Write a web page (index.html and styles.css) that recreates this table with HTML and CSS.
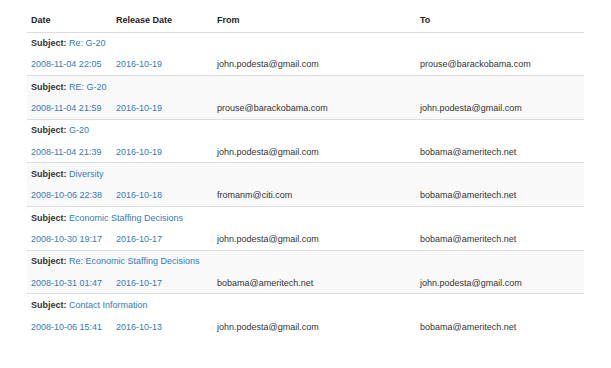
FILE: index.html
```html
<!DOCTYPE html>
<html lang="en">
<head>
  <meta charset="UTF-8">
  <title>Emails</title>
  <link rel="stylesheet" href="styles.css">
</head>
<body>
  <div class="wrap">
    <table class="emails">
      <colgroup>
        <col class="c-date">
        <col class="c-release">
        <col class="c-from">
        <col class="c-to">
      </colgroup>
      <thead>
        <tr>
          <th>Date</th>
          <th>Release Date</th>
          <th>From</th>
          <th>To</th>
        </tr>
      </thead>
      <tbody>
        <tr class="subject"><td colspan="4"><b>Subject:</b> <a href="#">Re: G-20</a></td></tr>
        <tr class="meta"><td><a href="#">2008-11-04 22:05</a></td><td><a href="#">2016-10-19</a></td><td>john.podesta@gmail.com</td><td>prouse@barackobama.com</td></tr>
      </tbody>
      <tbody class="odd">
        <tr class="subject"><td colspan="4"><b>Subject:</b> <a href="#">RE: G-20</a></td></tr>
        <tr class="meta"><td><a href="#">2008-11-04 21:59</a></td><td><a href="#">2016-10-19</a></td><td>prouse@barackobama.com</td><td>john.podesta@gmail.com</td></tr>
      </tbody>
      <tbody>
        <tr class="subject"><td colspan="4"><b>Subject:</b> <a href="#">G-20</a></td></tr>
        <tr class="meta"><td><a href="#">2008-11-04 21:39</a></td><td><a href="#">2016-10-19</a></td><td>john.podesta@gmail.com</td><td>bobama@ameritech.net</td></tr>
      </tbody>
      <tbody class="odd">
        <tr class="subject"><td colspan="4"><b>Subject:</b> <a href="#">Diversity</a></td></tr>
        <tr class="meta"><td><a href="#">2008-10-06 22:38</a></td><td><a href="#">2016-10-18</a></td><td>fromanm@citi.com</td><td>bobama@ameritech.net</td></tr>
      </tbody>
      <tbody>
        <tr class="subject"><td colspan="4"><b>Subject:</b> <a href="#">Economic Staffing Decisions</a></td></tr>
        <tr class="meta"><td><a href="#">2008-10-30 19:17</a></td><td><a href="#">2016-10-17</a></td><td>john.podesta@gmail.com</td><td>bobama@ameritech.net</td></tr>
      </tbody>
      <tbody class="odd">
        <tr class="subject"><td colspan="4"><b>Subject:</b> <a href="#">Re: Economic Staffing Decisions</a></td></tr>
        <tr class="meta"><td><a href="#">2008-10-31 01:47</a></td><td><a href="#">2016-10-17</a></td><td>bobama@ameritech.net</td><td>john.podesta@gmail.com</td></tr>
      </tbody>
      <tbody>
        <tr class="subject"><td colspan="4"><b>Subject:</b> <a href="#">Contact Information</a></td></tr>
        <tr class="meta"><td><a href="#">2008-10-06 15:41</a></td><td><a href="#">2016-10-13</a></td><td>john.podesta@gmail.com</td><td>bobama@ameritech.net</td></tr>
      </tbody>
    </table>
  </div>
</body>
</html>
```
FILE: styles.css
```css
/* Base */
* { box-sizing: border-box; }
body {
  margin: 0;
  background: #fff;
  color: #333;
  font-family: "Liberation Sans", Arial, sans-serif;
  font-size: 9px;
}
a {
  color: #337ab7;
  text-decoration: none;
}
.wrap { padding: 8px 27px; }

/* Table */
.emails {
  width: 557px;
  border-collapse: collapse;
  table-layout: fixed;
}
.c-date { width: 85px; }
.c-release { width: 101px; }
.c-from { width: 203px; }
.emails th {
  text-align: left;
  font-weight: bold;
  color: #222;
  height: 24px;
  padding: 0 4px;
  border-bottom: 1px solid #ddd;
  vertical-align: middle;
}
.emails td {
  padding: 0 4px;
  vertical-align: middle;
  white-space: nowrap;
}
.emails .subject td {
  height: 21.83px;
  border-top: 1px solid #ddd;
}
.emails thead + tbody .subject td { border-top: none; }
.emails .meta td { height: 21.83px; }
.emails tbody.odd { background: #f9f9f9; }
```
